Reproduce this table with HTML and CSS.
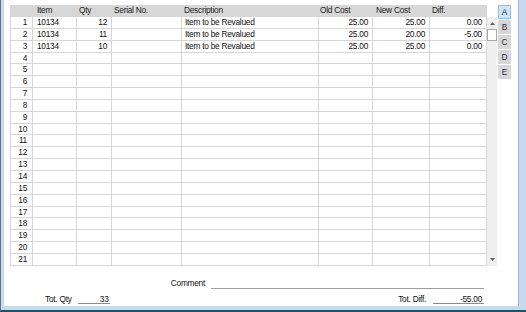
FILE: index.html
```html
<!DOCTYPE html>
<html lang="en">
<head>
<meta charset="utf-8">
<title>Revaluation</title>
<link rel="stylesheet" href="styles.css">
</head>
<body>
<div class="window">
  <div class="panel">
    <div class="main">
      <div class="sheet">
        <div class="row head"><span></span><span class="pl">Item</span><span>Qty</span><span>Serial No.</span><span>Description</span><span class="p1">Old Cost</span><span class="p3">New Cost</span><span>Diff.</span></div>
        <div class="row"><span class="num">1</span><span class="pl">10134</span><span class="r">12</span><span></span><span class="desc">Item to be Revalued</span><span class="r">25.00</span><span class="r">25.00</span><span class="r">0.00</span></div>
        <div class="row"><span class="num">2</span><span class="pl">10134</span><span class="r">11</span><span></span><span class="desc">Item to be Revalued</span><span class="r">25.00</span><span class="r">20.00</span><span class="r">-5.00</span></div>
        <div class="row"><span class="num">3</span><span class="pl">10134</span><span class="r">10</span><span></span><span class="desc">Item to be Revalued</span><span class="r">25.00</span><span class="r">25.00</span><span class="r">0.00</span></div>
        <div class="row"><span class="num">4</span><span></span><span></span><span></span><span></span><span></span><span></span><span></span></div>
        <div class="row"><span class="num">5</span><span></span><span></span><span></span><span></span><span></span><span></span><span></span></div>
        <div class="row"><span class="num">6</span><span></span><span></span><span></span><span></span><span></span><span></span><span></span></div>
        <div class="row"><span class="num">7</span><span></span><span></span><span></span><span></span><span></span><span></span><span></span></div>
        <div class="row"><span class="num">8</span><span></span><span></span><span></span><span></span><span></span><span></span><span></span></div>
        <div class="row"><span class="num">9</span><span></span><span></span><span></span><span></span><span></span><span></span><span></span></div>
        <div class="row"><span class="num">10</span><span></span><span></span><span></span><span></span><span></span><span></span><span></span></div>
        <div class="row"><span class="num">11</span><span></span><span></span><span></span><span></span><span></span><span></span><span></span></div>
        <div class="row"><span class="num">12</span><span></span><span></span><span></span><span></span><span></span><span></span><span></span></div>
        <div class="row"><span class="num">13</span><span></span><span></span><span></span><span></span><span></span><span></span><span></span></div>
        <div class="row"><span class="num">14</span><span></span><span></span><span></span><span></span><span></span><span></span><span></span></div>
        <div class="row"><span class="num">15</span><span></span><span></span><span></span><span></span><span></span><span></span><span></span></div>
        <div class="row"><span class="num">16</span><span></span><span></span><span></span><span></span><span></span><span></span><span></span></div>
        <div class="row"><span class="num">17</span><span></span><span></span><span></span><span></span><span></span><span></span><span></span></div>
        <div class="row"><span class="num">18</span><span></span><span></span><span></span><span></span><span></span><span></span><span></span></div>
        <div class="row"><span class="num">19</span><span></span><span></span><span></span><span></span><span></span><span></span><span></span></div>
        <div class="row"><span class="num">20</span><span></span><span></span><span></span><span></span><span></span><span></span><span></span></div>
        <div class="row"><span class="num">21</span><span></span><span></span><span></span><span></span><span></span><span></span><span></span></div>
      </div>
      <div class="vscroll">
        <div class="arrow"><svg width="5" height="3" viewBox="0 0 5 3"><path d="M0 3 L2.5 0 L5 3 Z" fill="#5f5f5f"/></svg></div>
        <div class="thumb"></div>
        <div class="track"></div>
        <div class="arrow"><svg width="5" height="3" viewBox="0 0 5 3"><path d="M0 0 L5 0 L2.5 3 Z" fill="#5f5f5f"/></svg></div>
      </div>
      <div class="tabs">
        <div class="tab active">A</div>
        <div class="tab">B</div>
        <div class="tab">C</div>
        <div class="tab">D</div>
        <div class="tab">E</div>
      </div>
    </div>
    <div class="footer">
      <div class="comment-row"><span class="label">Comment</span><span class="comment-line"></span></div>
      <div class="totals">
        <div class="total"><span class="label">Tot. Qty</span><span class="field qty">33</span></div>
        <div class="total wide"><span class="label">Tot. Diff.</span><span class="field diff">-55.00</span></div>
      </div>
    </div>
  </div>
</div>
</body>
</html>
```
FILE: styles.css
```css
* { box-sizing: border-box; }

html, body { margin: 0; padding: 0; }

body {
  font-family: "Liberation Sans", Arial, sans-serif;
  font-size: 8.3px;
  color: #111;
  letter-spacing: -0.25px;
}

/* window chrome */
.window {
  width: 526px;
  height: 312px;
  display: flex;
  background: #c6daef;
  border-left: 1px solid #6b737c;
  border-bottom: 2px solid #1f5468;
  padding: 0 7px 4px 3px;
}

.panel {
  flex: 1;
  background: #fff;
  border-right: 1px solid #9db9d7;
  display: flex;
  flex-direction: column;
}

.main {
  display: flex;
  align-items: flex-start;
  padding: 5px 0 0 6px;
}

/* row grid */
.sheet {
  display: grid;
  grid-template-columns: 22px 44px 35px 70px 137px 54px 57px 57px;
  grid-template-rows: 12px;
  grid-auto-rows: 11.85px;
  border-left: 1px solid #d6d6d6;
}

.row { display: contents; }

.row > span {
  border-right: 1px solid #d6d6d6;
  border-bottom: 1px solid #d6d6d6;
  line-height: 10.85px;
  padding: 0 4px 0 3px;
  white-space: nowrap;
  overflow: hidden;
}

.row.head > span {
  background: #d7d7d7;
  border-right-color: #d7d7d7;
  line-height: 11px;
  padding: 0 2px;
  color: #222;
}

.row.head > span.pl,
.row > span.pl { padding-left: 4px; }
.row.head > span.p1 { padding-left: 1px; }
.row.head > span.p3 { padding-left: 3px; }

.row > span.num { text-align: right; padding-right: 5px; }
.row > span.r { text-align: right; padding-right: 4px; }
.row > span.desc { padding-left: 3px; }

/* vertical scroll bar */
.vscroll {
  width: 10px;
  align-self: stretch;
  margin-top: 12px;
  background: #efefef;
  display: flex;
  flex-direction: column;
}

.vscroll .arrow {
  height: 12px;
  display: flex;
  align-items: center;
  justify-content: center;
}

.vscroll .arrow svg { display: block; }

.vscroll .thumb {
  height: 12px;
  background: #fdfdfd;
  border: 1px solid #a8a8a8;
}

.vscroll .track { flex: 1; }

/* page tabs */
.tabs {
  display: flex;
  flex-direction: column;
  gap: 1px;
  margin-left: 1px;
}

.tab {
  width: 13px;
  height: 14px;
  line-height: 14px;
  text-align: center;
  background: #d7d7d7;
  color: #1f2d44;
  letter-spacing: 0;
}

.tab.active {
  background: #cfe5f8;
  border: 1px solid #92c0ea;
  line-height: 12px;
}

/* footer fields */
.footer {
  display: flex;
  flex-direction: column;
}

.comment-row {
  display: flex;
  justify-content: flex-end;
  align-items: flex-end;
  gap: 6px;
  margin-top: 12px;
  padding-right: 34px;
  height: 11px;
  line-height: 11px;
}

.comment-line {
  width: 273px;
  height: 11px;
  border-bottom: 1px solid #9d9d9d;
}

.totals {
  display: flex;
  justify-content: space-between;
  margin-top: 5px;
  padding: 0 34px 0 41px;
  height: 10px;
  line-height: 10px;
}

.total {
  display: flex;
  gap: 6px;
}

.total.wide { gap: 7px; }

.field {
  height: 10px;
  text-align: right;
  border-bottom: 1px solid #8c8c8c;
}

.field.qty { width: 32px; padding-right: 1px; }
.field.diff { width: 51px; padding-right: 2px; }
```
